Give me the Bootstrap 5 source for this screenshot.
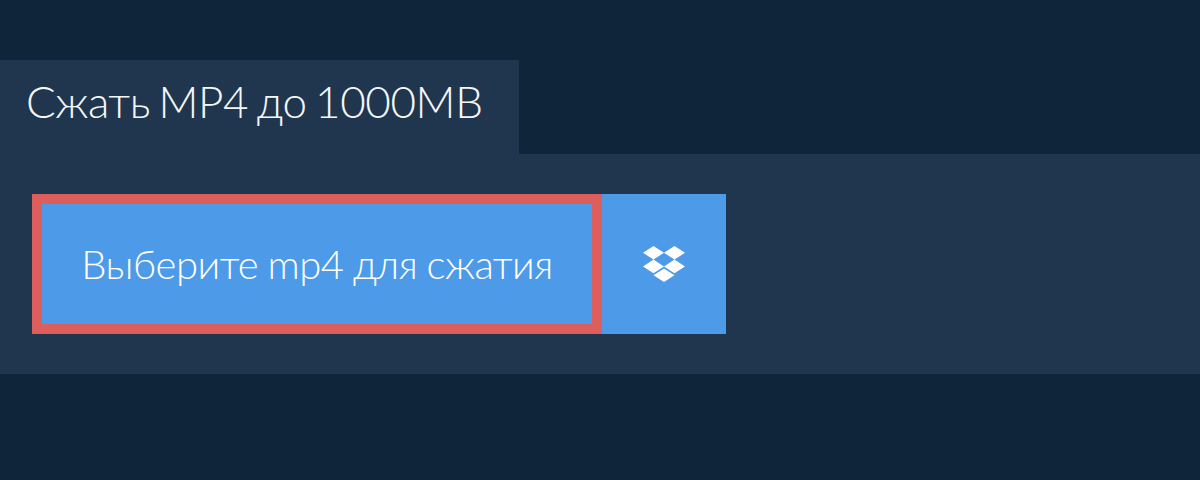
<!DOCTYPE html>
<html lang="ru"><head><meta charset="utf-8">
<link href="https://cdn.jsdelivr.net/npm/bootstrap@5.3.0/dist/css/bootstrap.min.css" rel="stylesheet">
<style>
html,body{height:480px;overflow:hidden}
body{background:#0e253a;font-family:Lato,"Open Sans",sans-serif;font-weight:300;color:#fff;padding-top:60px}
.tabhead{width:519px;height:94px;background:#20364f;padding-left:26px;font-size:44px;letter-spacing:-.4px;word-spacing:-3px;line-height:82px;font-weight:300;color:#f5f7f9}
.panelbox{height:220px;background:#20364f;padding:40px 32px}
.pickbtn{width:570px;height:140px;background:#4d9ae8;border:10px solid #dc5f5d;border-radius:0;color:#fff;font-size:40px;letter-spacing:-.5px;word-spacing:-1px;font-weight:300}
.dropbtn{width:124px;height:140px;background:#4d9ae8;border:0;border-radius:0}
</style></head><body>
<div class="tabhead">Сжать MP4 до 1000MB</div>
<div class="panelbox d-flex">
<button class="btn pickbtn p-0 d-flex align-items-center justify-content-center">Выберите mp4 для сжатия</button>
<button class="btn dropbtn p-0 d-flex align-items-center justify-content-center">
<svg width="42" height="36" viewBox="0 0 42 36" fill="#fff"><path d="M10.5 0 0 6.8l10.5 6.8L21 6.8zM31.5 0 21 6.8l10.5 6.8L42 6.8zM0 20.4l10.5 6.8L21 20.4l-10.5-6.8zM31.5 13.6 21 20.4l10.5 6.8L42 20.4zM10.5 29.2 21 36l10.5-6.8L21 22.4z"/></svg>
</button>
</div>
<script src="https://cdn.jsdelivr.net/npm/bootstrap@5.3.0/dist/js/bootstrap.bundle.min.js"></script>
</body></html>
